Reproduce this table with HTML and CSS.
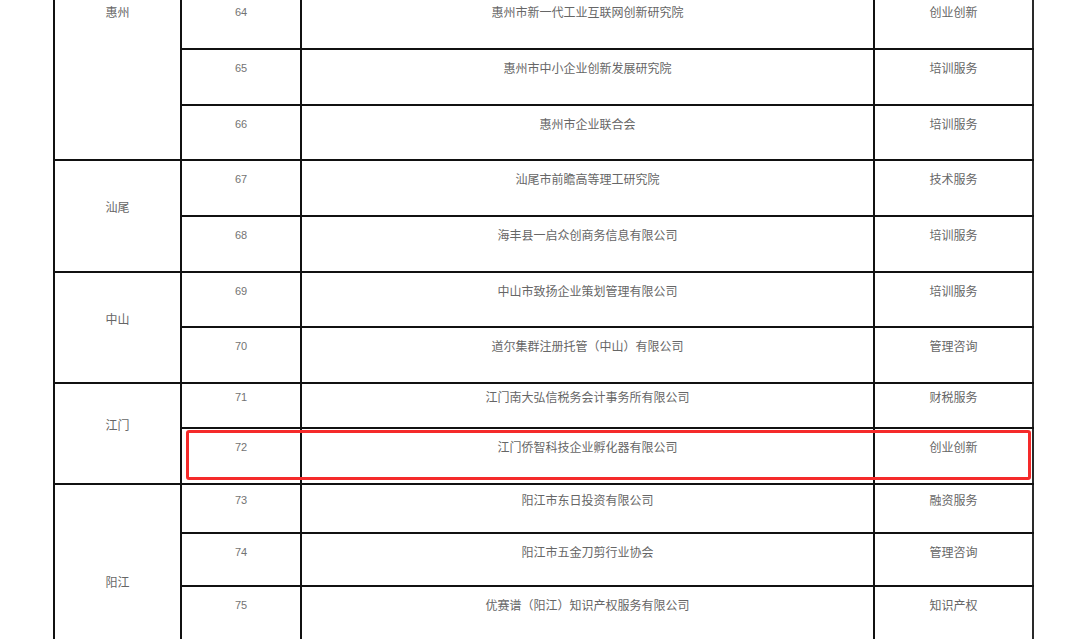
FILE: index.html
```html
<!DOCTYPE html>
<html lang="zh-CN">
<head>
<meta charset="utf-8">
<title>名单</title>
<link rel="stylesheet" href="styles.css">
</head>
<body>
<div class="sheet">
  <table class="list">
    <colgroup>
      <col class="c-region">
      <col class="c-no">
      <col class="c-name">
      <col class="c-type">
    </colgroup>
    <tbody>
      <tr class="h56">
        <td class="region top" rowspan="3">惠州</td>
        <td class="no">64</td>
        <td class="name">惠州市新一代工业互联网创新研究院</td>
        <td class="type">创业创新</td>
      </tr>
      <tr class="h56">
        <td class="no">65</td>
        <td class="name">惠州市中小企业创新发展研究院</td>
        <td class="type">培训服务</td>
      </tr>
      <tr class="h55">
        <td class="no">66</td>
        <td class="name">惠州市企业联合会</td>
        <td class="type">培训服务</td>
      </tr>
      <tr class="h56">
        <td class="region" rowspan="2">汕尾</td>
        <td class="no">67</td>
        <td class="name">汕尾市前瞻高等理工研究院</td>
        <td class="type">技术服务</td>
      </tr>
      <tr class="h56">
        <td class="no">68</td>
        <td class="name">海丰县一启众创商务信息有限公司</td>
        <td class="type">培训服务</td>
      </tr>
      <tr class="h55">
        <td class="region" rowspan="2">中山</td>
        <td class="no">69</td>
        <td class="name">中山市致扬企业策划管理有限公司</td>
        <td class="type">培训服务</td>
      </tr>
      <tr class="h56">
        <td class="no">70</td>
        <td class="name">道尔集群注册托管（中山）有限公司</td>
        <td class="type">管理咨询</td>
      </tr>
      <tr class="h45 tight">
        <td class="region" rowspan="2">江门</td>
        <td class="no">71</td>
        <td class="name">江门南大弘信税务会计事务所有限公司</td>
        <td class="type">财税服务</td>
      </tr>
      <tr class="h56">
        <td class="no">72</td>
        <td class="name">江门侨智科技企业孵化器有限公司</td>
        <td class="type">创业创新</td>
      </tr>
      <tr class="h49 mid">
        <td class="region" rowspan="4">阳江</td>
        <td class="no">73</td>
        <td class="name">阳江市东日投资有限公司</td>
        <td class="type">融资服务</td>
      </tr>
      <tr class="h53">
        <td class="no">74</td>
        <td class="name">阳江市五金刀剪行业协会</td>
        <td class="type">管理咨询</td>
      </tr>
      <tr class="h56">
        <td class="no">75</td>
        <td class="name">优赛谱（阳江）知识产权服务有限公司</td>
        <td class="type">知识产权</td>
      </tr>
      <tr class="h56">
        <td class="no"></td>
        <td class="name"></td>
        <td class="type"></td>
      </tr>
    </tbody>
  </table>
  <div class="highlight"></div>
</div>
</body>
</html>
```

FILE: styles.css
```css
html, body {
  margin: 0;
  padding: 0;
  background: #ffffff;
  overflow: hidden;
}

.sheet {
  position: relative;
  width: 1080px;
  height: 639px;
  overflow: hidden;
}

.list {
  border-collapse: collapse;
  table-layout: fixed;
  width: 981px;
  margin: -8px 0 0 53px;
  font-family: "Noto Sans CJK SC", "Liberation Sans", sans-serif;
  font-size: 12px;
  line-height: 12px;
  color: #666666;
}

.c-region { width: 127px; }
.c-no { width: 120px; }
.c-name { width: 573px; }
.c-type { width: 159px; }

.list td {
  border: 2px solid #111111;
  text-align: center;
  vertical-align: top;
  padding: 12px 0 0 0;
}

.list td.no {
  font-family: "Liberation Sans", "DejaVu Sans", sans-serif;
  font-size: 11px;
  color: #737373;
}

.list td.type {
  border-right-color: #2a2a2a;
}

.list td.region {
  vertical-align: middle;
  padding: 0 0 18px 0;
}

.list td.region.top {
  vertical-align: top;
  padding: 12px 0 0 0;
}

.list tr.tight td { padding-top: 7px; }
.list tr.tight td.region { padding: 0 0 18px 0; }
.list tr.mid td { padding-top: 9px; }
.list tr.mid td.region { padding: 0 0 18px 0; }

.h45 { height: 45px; }
.h49 { height: 49px; }
.h53 { height: 53px; }
.h55 { height: 55px; }
.h56 { height: 56px; }

.highlight {
  position: absolute;
  left: 186px;
  top: 430px;
  width: 839px;
  height: 44px;
  border: 3px solid #f52a2a;
  border-radius: 3px;
  pointer-events: none;
}
```
